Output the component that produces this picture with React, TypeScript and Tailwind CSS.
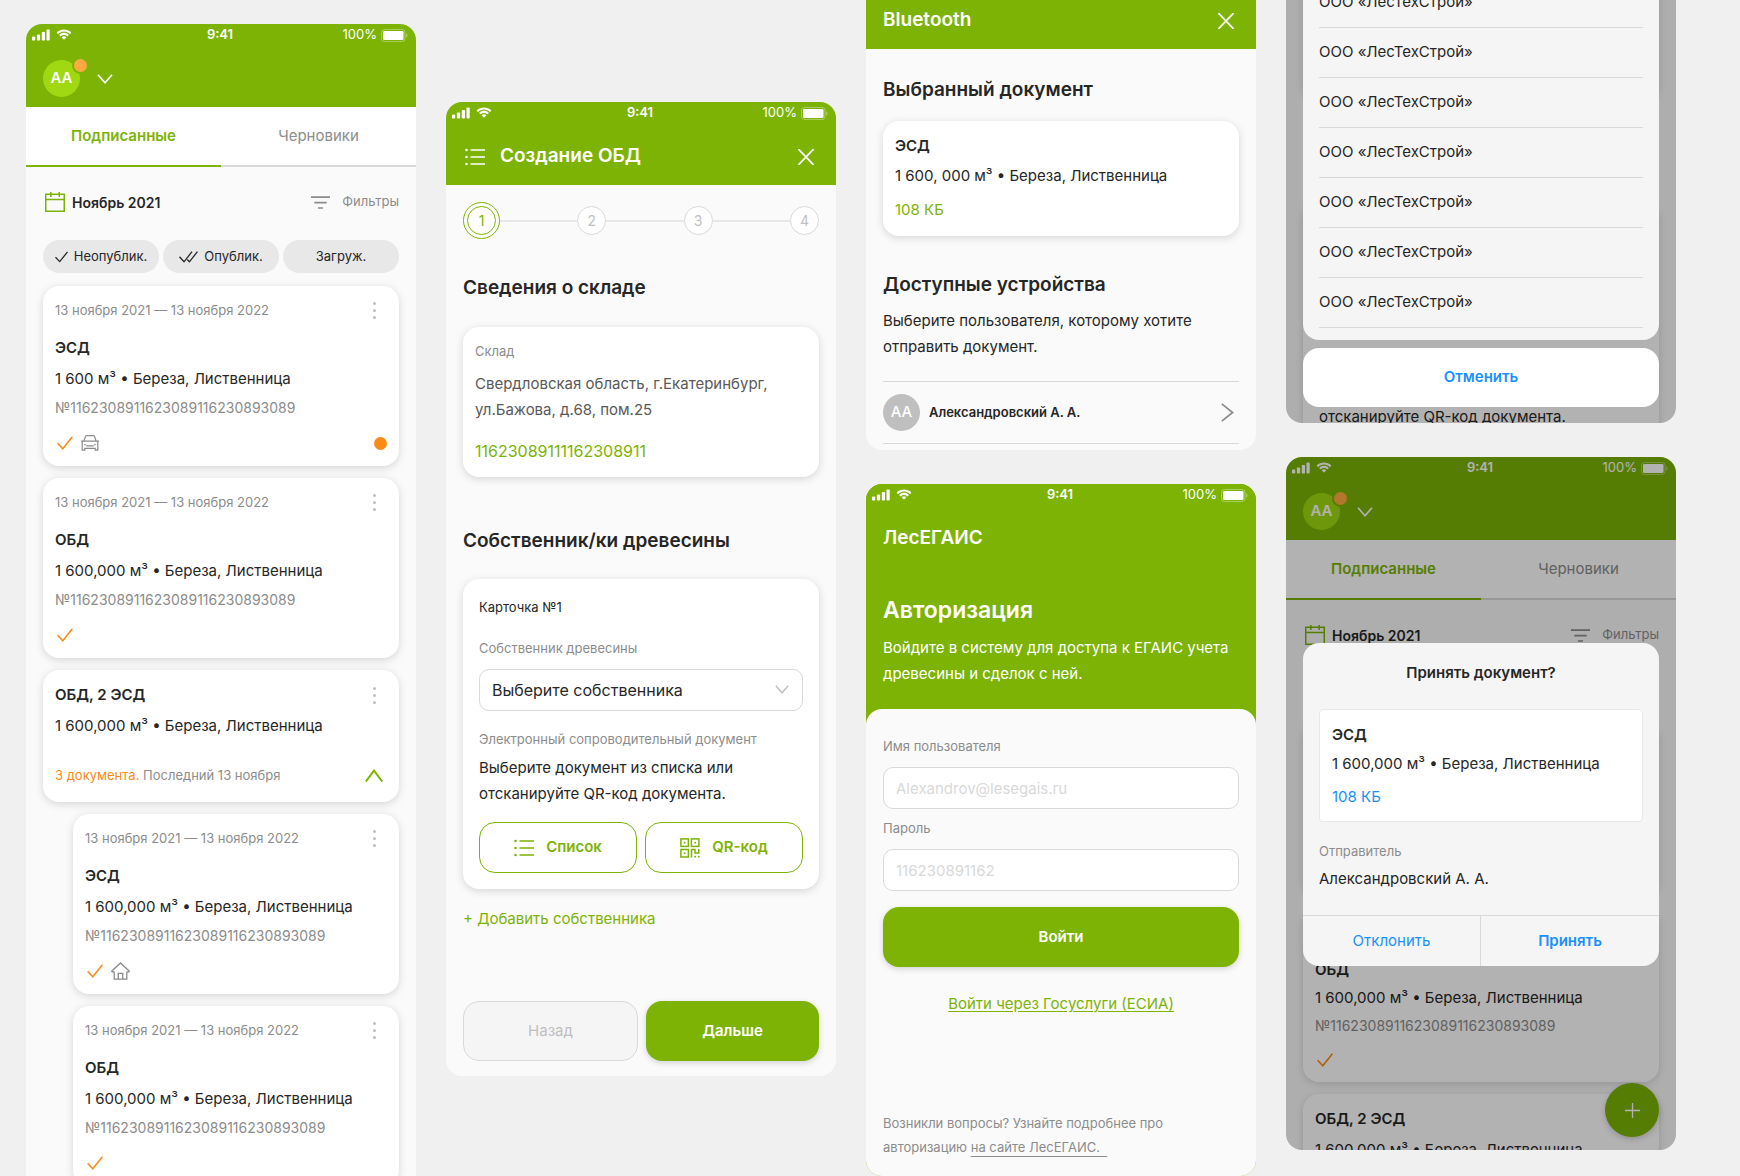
import { useId, type ReactNode } from "react";

/* ---------- icons ---------- */

function SignalIcon() {
  return (
    <svg width="18" height="12" viewBox="0 0 18 12" fill="currentColor" aria-hidden="true">
      <rect x="0" y="7.5" width="3.2" height="4" rx="0.8" />
      <rect x="4.9" y="5.5" width="3.2" height="6" rx="0.8" />
      <rect x="9.8" y="3" width="3.2" height="8.5" rx="0.8" />
      <rect x="14.5" y="0.5" width="3.2" height="11" rx="0.8" />
    </svg>
  );
}

function WifiIcon() {
  return (
    <svg width="16" height="12" viewBox="0 0 16 12" fill="currentColor" aria-hidden="true">
      <path d="M8 2.6c2.2 0 4.2.9 5.7 2.3.1.1.3.1.4 0l1.1-1.1c.1-.1.1-.3 0-.5C11.200-.3 4.800-.3.800 3.300c-.1.200-.1.400 0 .5l1.100 1.100c.1.100.3.100.4 0C3.800 3.500 5.800 2.600 8 2.600z" />
      <path d="M8 6.100c1.200 0 2.300.5 3.200 1.200.1.100.3.100.4 0l1.100-1.100c.1-.1.1-.3 0-.5-2.600-2.500-6.800-2.500-9.400 0-.1.200-.1.400 0 .5l1.100 1.100c.1.100.3.100.4 0C5.700 6.600 6.800 6.100 8 6.100z" />
      <path d="M10.200 8.500c.1-.1.1-.3 0-.5-1.300-1.100-3.100-1.100-4.400 0-.1.200-.1.400 0 .5l2 2c.1.100.3.100.4 0z" />
    </svg>
  );
}

function BatteryIcon() {
  return (
    <svg width="27" height="13" viewBox="0 0 27 13" aria-hidden="true">
      <rect x="0.5" y="0.5" width="23.500" height="12" rx="2.800" fill="none" stroke="currentColor" strokeOpacity="0.35" />
      <rect x="2" y="2" width="20.500" height="9" rx="1.200" fill="currentColor" />
      <path d="M25.200 4.500v4c.8-.3 1.300-1.100 1.300-2s-.5-1.700-1.300-2z" fill="currentColor" fillOpacity="0.4" />
    </svg>
  );
}

function ChevronDown({ className }: { className: string }) {
  return (
    <svg className={className} viewBox="0 0 16 10" fill="none" stroke="currentColor" strokeWidth="1.600" aria-hidden="true">
      <path d="M1 0.700 8 8.800 15 0.700" />
    </svg>
  );
}

function ChevronUp() {
  return (
    <svg width="18" height="13" viewBox="0 0 18 13" fill="none" stroke="currentColor" strokeWidth="2" aria-hidden="true">
      <path d="M0.800 12.500 9 1.600 17.200 12.500" />
    </svg>
  );
}

function ChevronRight() {
  return (
    <svg width="13" height="19" viewBox="0 0 13 19" fill="none" stroke="currentColor" strokeWidth="1.700" aria-hidden="true">
      <path d="M0.800 0.900 11.600 9.500 0.800 18.100" />
    </svg>
  );
}

function CloseIcon() {
  return (
    <svg width="16" height="16" viewBox="0 0 16 16" fill="none" stroke="currentColor" strokeWidth="1.700" strokeLinecap="round" aria-hidden="true">
      <path d="M0.900 0.600 15.100 15.400M15.100 0.600 0.900 15.400" />
    </svg>
  );
}

function ListIcon() {
  return (
    <svg width="20" height="18" viewBox="0 0 20 18" aria-hidden="true">
      <g fill="currentColor">
        <circle cx="1.500" cy="2" r="1.300" />
        <circle cx="1.500" cy="9" r="1.300" />
        <circle cx="1.500" cy="16" r="1.300" />
      </g>
      <path d="M5.500 2H20M5.500 9H20M5.500 16H20" stroke="currentColor" strokeWidth="1.500" />
    </svg>
  );
}

function QrIcon() {
  return (
    <svg width="20" height="20" viewBox="0 0 20 20" aria-hidden="true">
      <g fill="none" stroke="currentColor" strokeWidth="1.500">
        <rect x="0.900" y="0.900" width="7.500" height="7.500" />
        <rect x="11.400" y="0.900" width="7.500" height="7.500" />
        <rect x="0.900" y="11.500" width="7.500" height="7.500" />
        <path d="M11.500 19.500V11.500H15V15H18.800V11" />
      </g>
      <g fill="currentColor">
        <rect x="3.800" y="3.800" width="1.700" height="1.700" />
        <rect x="14.300" y="3.800" width="1.700" height="1.700" />
        <rect x="3.800" y="14.400" width="1.700" height="1.700" />
        <rect x="14.300" y="17.800" width="1.700" height="1.700" />
        <rect x="17.900" y="17.800" width="1.700" height="1.700" />
      </g>
    </svg>
  );
}

function CalendarIcon() {
  return (
    <svg width="20" height="20" viewBox="0 0 20 20" fill="none" stroke="currentColor" strokeWidth="1.500" aria-hidden="true">
      <rect x="0.750" y="2.250" width="18.500" height="17" />
      <path d="M0.750 7.500H19.250M5.800 0V5M14.200 0V5" />
    </svg>
  );
}

function FilterIcon() {
  return (
    <svg width="19" height="13" viewBox="0 0 19 13" fill="none" stroke="currentColor" strokeWidth="1.700" aria-hidden="true">
      <path d="M0 1.200H19M3.300 6.600H15.700M7 12H12" />
    </svg>
  );
}

function CheckIcon({ className }: { className: string }) {
  return (
    <svg className={className} viewBox="0 0 16 14" fill="none" stroke="currentColor" strokeWidth="1.600" aria-hidden="true">
      <path d="M0.600 7.300 5.800 12.700 15.400 0.700" />
    </svg>
  );
}

function DoubleCheckIcon() {
  return (
    <svg width="19" height="12" viewBox="0 0 19 12" fill="none" stroke="currentColor" strokeWidth="1.300" aria-hidden="true">
      <path d="M0.500 5.800 5 10.800 13 0.700M8.300 8.500 10.400 10.800 18.400 0.700" />
    </svg>
  );
}

function CarIcon() {
  return (
    <svg width="18" height="16" viewBox="0 0 18 16" fill="none" stroke="currentColor" strokeWidth="1.200" aria-hidden="true">
      <path d="M2.800 6.200 4.600 1.300Q4.800 0.700 5.500 0.700H12.500Q13.200 0.700 13.400 1.300L15.200 6.200M0 6.200H18M1.200 6.200V15.200H3.800V13.300H14.200V15.200H16.800V6.200" />
      <path d="M5.800 10.200V10.900H12.200V10.200M3.300 9.700H4.800M13.200 9.700H14.700" />
    </svg>
  );
}

function HouseIcon() {
  return (
    <svg width="19" height="18" viewBox="0 0 19 18" fill="none" stroke="currentColor" strokeWidth="1.300" aria-hidden="true">
      <path d="M3.200 9.500V17.200H15.800V9.500M3.200 9.900H1.100Q0.400 9.500 0.900 8.900L9.500 0.900 18.100 8.900Q18.600 9.500 17.900 9.900H15.800" />
      <path d="M7.300 17V11.300H11.700V17" />
    </svg>
  );
}

function PlusIcon() {
  return (
    <svg width="15" height="15" viewBox="0 0 15 15" fill="none" stroke="currentColor" strokeWidth="1.300" aria-hidden="true">
      <path d="M7.500 0V15M0 7.500H15" />
    </svg>
  );
}

/* ---------- shared parts ---------- */

function Phone({ className = "", children }: { className?: string; children: ReactNode }) {
  return (
    <section className={`relative overflow-hidden rounded-2xl bg-[#fafafa] ${className}`}>{children}</section>
  );
}

function StatusBar() {
  return (
    <div className="grid h-[22px] grid-cols-3 items-center pr-2 pl-1.5 text-[13px] text-white">
      <div className="flex items-center gap-1.5">
        <SignalIcon />
        <WifiIcon />
      </div>
      <span className="text-center font-semibold">9:41</span>
      <div className="flex items-center justify-end gap-1">
        <span>100%</span>
        <BatteryIcon />
      </div>
    </div>
  );
}

function Header({ children }: { children: ReactNode }) {
  return (
    <header className="bg-[#7cb305] text-white">
      <StatusBar />
      <div className="flex items-center px-[17px] pt-[14px] pb-[10px]">
        <div className="flex h-[37px] flex-1 items-center">{children}</div>
      </div>
    </header>
  );
}

function CloseButton() {
  return (
    <button type="button" aria-label="Закрыть" className="ml-auto grid size-[26px] place-items-center">
      <CloseIcon />
    </button>
  );
}

function Heading({ className = "", children }: { className?: string; children: ReactNode }) {
  return <h2 className={`text-[19px] leading-7 font-semibold ${className}`}>{children}</h2>;
}

function Card({ className = "", children }: { className?: string; children: ReactNode }) {
  return (
    <article className={`rounded-2xl bg-white shadow-[0_2px_8px_rgba(0,0,0,0.15)] ${className}`}>
      {children}
    </article>
  );
}

/* ---------- document list ---------- */

function MoreButton() {
  return (
    <button type="button" aria-label="Действия" className="flex h-5 w-[26px] flex-col items-center justify-center gap-1">
      <i className="size-[3px] rounded-full bg-[#bfbfbf]" />
      <i className="size-[3px] rounded-full bg-[#bfbfbf]" />
      <i className="size-[3px] rounded-full bg-[#bfbfbf]" />
    </button>
  );
}

type DocProps = {
  title: string;
  volume?: string;
  icon?: ReactNode;
  unread?: boolean;
  compact?: boolean;
  className?: string;
};

function DocCard({ title, volume = "1 600,000", icon, unread, compact, className = "" }: DocProps) {
  return (
    <Card className={`px-3 pt-[14px] ${compact ? "pb-3" : "pb-[13px]"} ${className}`}>
      <div className="flex items-center justify-between">
        <time className="text-[13px] leading-5 text-[#8c8c8c]">13 ноября 2021 — 13 ноября 2022</time>
        <MoreButton />
      </div>
      <h3 className="mt-4 text-[15px] leading-6 font-semibold">{title}</h3>
      <p className={`text-[15px] leading-6 ${compact ? "mt-1" : "mt-[7px]"}`}>{volume} м³ • Береза, Лиственница</p>
      <p className={`text-[14px] leading-5 text-[#8c8c8c] ${compact ? "mt-1.5" : "mt-[7px]"}`}>
        №1162308911623089116230893089
      </p>
      <div className={`flex h-5 items-center gap-2 pl-0.5 ${compact ? "mt-[14px]" : "mt-[15px]"}`}>
        <CheckIcon className="h-[14px] w-4 text-[#fa8c16]" />
        <span className="text-[#8c8c8c]">{icon}</span>
        {unread && <i className="ml-auto size-[13px] rounded-full bg-[#fa8c16]" />}
      </div>
    </Card>
  );
}

function GroupCard() {
  return (
    <Card className="px-3 pt-[13px] pb-[17px]">
      <div className="flex items-center justify-between">
        <h3 className="text-[15px] leading-6 font-semibold">ОБД, 2 ЭСД</h3>
        <MoreButton />
      </div>
      <p className="mt-[7px] text-[15px] leading-6">1 600,000 м³ • Береза, Лиственница</p>
      <div className="mt-[27px] flex items-center justify-between">
        <p className="text-[13px] leading-5 text-[#8c8c8c]">
          <span className="text-[#fa8c16]">3 документа.</span> Последний 13 ноября
        </p>
        <button type="button" aria-label="Свернуть" className="mr-1 text-[#7cb305]">
          <ChevronUp />
        </button>
      </div>
    </Card>
  );
}

function DocumentsScreen({ compact, children }: { compact?: boolean; children: ReactNode }) {
  const chip = "flex h-[33px] flex-1 items-center justify-center rounded-full bg-[#e8e8e8] text-[13px]";
  return (
    <>
      <Header>
        <div className="relative grid size-[37px] place-items-center rounded-full bg-[#a0d911] text-[15px] font-semibold">
          АА
          <i className="absolute -top-[3px] -right-[9px] size-[17px] rounded-full border-2 border-[#7cb305] bg-[#ffa940]" />
        </div>
        <button type="button" aria-label="Сменить профиль" className="ml-[17px]">
          <ChevronDown className="h-[10px] w-4" />
        </button>
      </Header>
      <nav className="grid h-[60px] grid-cols-2 bg-white text-[15px]">
        <button type="button" className="border-b-2 border-[#7cb305] font-semibold text-[#7cb305]">
          Подписанные
        </button>
        <button type="button" className="border-b-2 border-[#d9d9d9] text-[#8c8c8c]">
          Черновики
        </button>
      </nav>
      <div className="px-[17px] pb-4">
        <div className="mt-[23px] flex h-6 items-center justify-between">
          <button type="button" className="flex items-center gap-[7px] pl-0.5 text-[14px] font-semibold">
            <span className="text-[#7cb305]">
              <CalendarIcon />
            </span>
            Ноябрь 2021
          </button>
          <button type="button" className="flex items-center gap-3 text-[13px] text-[#8c8c8c]">
            <FilterIcon />
            Фильтры
          </button>
        </div>
        <div className="mt-[26px] flex gap-1">
          <button type="button" className={`${chip} gap-1.5`}>
            <CheckIcon className="h-3 w-[13px]" />
            Неопублик.
          </button>
          <button type="button" className={`${chip} gap-1.5`}>
            <DoubleCheckIcon />
            Опублик.
          </button>
          <button type="button" className={chip}>
            Загруж.
          </button>
        </div>
        <div className={`flex flex-col gap-3 ${compact ? "mt-4" : "mt-[13px]"}`}>{children}</div>
      </div>
    </>
  );
}

/* ---------- document creation ---------- */

function Step({ n }: { n: number }) {
  return (
    <>
      <li className="h-0.5 flex-1 bg-[#e8e8e8]" aria-hidden="true" />
      <li className="grid size-[29px] place-items-center rounded-full border border-[#d9d9d9] bg-white text-[#bfbfbf]">
        {n}
      </li>
    </>
  );
}

function CreateScreen() {
  const ownerId = useId();
  const action =
    "flex h-[51px] flex-1 items-center justify-center gap-3 rounded-2xl border border-[#7cb305] text-[15px] font-semibold text-[#7cb305]";
  return (
    <>
      <Header>
        <button type="button" aria-label="Меню" className="grid w-6 place-items-center">
          <ListIcon />
        </button>
        <h1 className="ml-[13px] text-[19px] font-semibold">Создание ОБД</h1>
        <CloseButton />
      </Header>
      <div className="px-[17px] pb-[15px]">
        <ol className="mt-[17px] flex items-center text-[14px]">
          <li className="grid size-[37px] place-items-center rounded-full border border-[#7cb305] bg-white text-[#7cb305]">
            <span className="grid size-[29px] place-items-center rounded-full border border-[#7cb305]">1</span>
          </li>
          <Step n={2} />
          <Step n={3} />
          <Step n={4} />
        </ol>

        <Heading className="mt-[35px]">Сведения о складе</Heading>
        <Card className="mt-[25px] px-3 pt-[14px] pb-[14px]">
          <p className="text-[13px] leading-5 text-[#8c8c8c]">Склад</p>
          <p className="mt-2.5 text-[15px] leading-[26px] text-[#595959]">
            Свердловская область, г.Екатеринбург,
            <br />
            ул.Бажова, д.68, пом.25
          </p>
          <p className="mt-4 text-[16px] leading-6 text-[#7cb305]">11623089111162308911</p>
        </Card>

        <Heading className="mt-[50px]">Собственник/ки древесины</Heading>
        <Card className="mt-6 p-4">
          <p className="mt-[2px] text-[13px] leading-5">Карточка №1</p>
          <label htmlFor={ownerId} className="mt-[21px] block text-[13px] leading-5 text-[#8c8c8c]">
            Собственник древесины
          </label>
          <div className="relative mt-[11px]">
            <select
              id={ownerId}
              className="h-[42px] w-full appearance-none rounded-[10px] border border-[#d9d9d9] bg-white px-3 text-[16px]"
            >
              <option>Выберите собственника</option>
            </select>
            <ChevronDown className="pointer-events-none absolute top-4 right-[14px] h-[9px] w-[14px] text-[#bfbfbf]" />
          </div>
          <p className="mt-[18px] text-[13px] leading-5 text-[#8c8c8c]">Электронный сопроводительный документ</p>
          <p className="mt-1.5 text-[15px] leading-[26px]">
            Выберите документ из списка или
            <br />
            отсканируйте QR-код документа.
          </p>
          <div className="mt-[15px] flex gap-2">
            <button type="button" className={action}>
              <ListIcon />
              Список
            </button>
            <button type="button" className={action}>
              <QrIcon />
              QR-код
            </button>
          </div>
        </Card>
        <button type="button" className="mt-[18px] block text-[15px] leading-6 text-[#7cb305]">
          + Добавить собственника
        </button>
        <div className="mt-[70px] flex gap-2 text-[15px]">
          <button type="button" disabled className="h-[60px] flex-1 rounded-2xl border border-[#d9d9d9] bg-[#f5f5f5] text-[#bfbfbf]">
            Назад
          </button>
          <button
            type="button"
            className="h-[60px] flex-1 rounded-2xl bg-[#7cb305] font-semibold text-white shadow-[0_2px_6px_rgba(0,0,0,0.16)]"
          >
            Дальше
          </button>
        </div>
      </div>
    </>
  );
}

/* ---------- bluetooth ---------- */

function BluetoothScreen() {
  return (
    <>
      <Header>
        <h1 className="text-[19px] font-semibold">Bluetooth</h1>
        <CloseButton />
      </Header>
      <div className="px-[17px] pb-1.5">
        <Heading className="mt-[27px]">Выбранный документ</Heading>
        <Card className="mt-[17px] px-3 pt-[13px] pb-[14px]">
          <h3 className="text-[15px] leading-6 font-semibold">ЭСД</h3>
          <p className="mt-1.5 text-[15px] leading-6">1 600, 000 м³ • Береза, Лиственница</p>
          <p className="mt-2.5 text-[15px] leading-6 text-[#7cb305]">108 КБ</p>
        </Card>
        <Heading className="mt-[35px]">Доступные устройства</Heading>
        <p className="mt-[9px] text-[15px] leading-[26px]">
          Выберите пользователя, которому хотите
          <br />
          отправить документ.
        </p>
        <button type="button" className="mt-[21px] flex h-[63px] w-full items-center border-y border-[#d9d9d9]">
          <span className="grid size-[37px] place-items-center rounded-full bg-[#bfbfbf] text-[15px] font-medium text-white">
            АА
          </span>
          <span className="ml-[9px] text-[13px] font-semibold">Александровский А. А.</span>
          <span className="mr-[5px] ml-auto text-[#8c8c8c]">
            <ChevronRight />
          </span>
        </button>
      </div>
    </>
  );
}

/* ---------- login ---------- */

function LoginScreen() {
  const userId = useId();
  const passId = useId();
  const input =
    "mt-[11px] h-[42px] w-full rounded-[10px] border border-[#d9d9d9] bg-white px-3 text-[15px] placeholder:text-[#d9d9d9]";
  return (
    <div className="bg-[#7cb305]">
      <Header>
        <h1 className="text-[19px] font-semibold">ЛесЕГАИС</h1>
      </Header>
      <div className="px-[17px] pt-[27px] pb-[22px] text-white">
        <h2 className="text-[23px] leading-8 font-semibold">Авторизация</h2>
        <p className="mt-[9px] text-[15px] leading-[26px]">
          Войдите в систему для доступа к ЕГАИС учета
          <br />
          древесины и сделок с ней.
        </p>
      </div>
      <form className="rounded-t-2xl bg-[#fafafa] px-[17px] pt-[27px] pb-[17px]">
        <label htmlFor={userId} className="block text-[13px] leading-5 text-[#8c8c8c]">
          Имя пользователя
        </label>
        <input id={userId} type="email" placeholder="Alexandrov@lesegais.ru" className={input} />
        <label htmlFor={passId} className="mt-[9px] block text-[13px] leading-5 text-[#8c8c8c]">
          Пароль
        </label>
        <input id={passId} type="password" placeholder="116230891162" className={input} />
        <button
          type="button"
          className="mt-4 h-[60px] w-full rounded-2xl bg-[#7cb305] text-[15px] font-semibold text-white shadow-[0_2px_6px_rgba(0,0,0,0.16)]"
        >
          Войти
        </button>
        <a href="#esia" className="mx-auto mt-[25px] block w-fit text-[15px] leading-6 text-[#7cb305] underline underline-offset-2">
          Войти через Госуслуги (ЕСИА)
        </a>
        <p className="mt-[95px] text-[13px] leading-6 text-[#8c8c8c]">
          Возникли вопросы? Узнайте подробнее про
          <br />
          авторизацию{" "}
          <a href="#site" className="underline underline-offset-4">
            на сайте ЛесЕГАИС.{"\u00a0\u00a0"}
          </a>
        </p>
      </form>
    </div>
  );
}

/* ---------- overlays ---------- */

function OwnerSheet() {
  return (
    <div className="absolute inset-0 flex flex-col justify-end gap-2 bg-black/30 px-[17px] pb-4">
      <ul className="rounded-2xl bg-[#f5f5f5] px-4 pt-3 pb-3 text-[15px]">
        {Array.from({ length: 7 }, (_, i) => (
          <li key={i} className="border-b border-[#d9d9d9]">
            <button type="button" className="h-[49px] w-full text-left">
              ООО «ЛесТехСтрой»
            </button>
          </li>
        ))}
      </ul>
      <button type="button" className="h-[59px] shrink-0 rounded-2xl bg-white text-[15px] font-semibold text-[#1890ff]">
        Отменить
      </button>
    </div>
  );
}

function AcceptDialog() {
  return (
    <div className="absolute inset-0 flex flex-col bg-black/30 px-[17px] pt-[186px]">
      <div role="dialog" aria-label="Принять документ?" className="overflow-hidden rounded-2xl bg-[#f5f5f5]">
        <div className="px-4 pt-[18px] pb-6">
          <h2 className="text-center text-[15px] leading-6 font-semibold">Принять документ?</h2>
          <div className="mt-[24px] rounded border border-[#e8e8e8] bg-white px-3 pt-[13px] pb-3">
            <h3 className="text-[15px] leading-6 font-semibold">ЭСД</h3>
            <p className="mt-[5px] text-[15px] leading-6">1 600,000 м³ • Береза, Лиственница</p>
            <p className="mt-[9px] text-[15px] leading-6 text-[#1890ff]">108 КБ</p>
          </div>
          <p className="mt-[19px] text-[13px] leading-5 text-[#8c8c8c]">Отправитель</p>
          <p className="mt-1.5 text-[15px] leading-6">Александровский А. А.</p>
        </div>
        <div className="grid grid-cols-2 border-t border-[#d9d9d9] text-[15px] text-[#1890ff]">
          <button type="button" className="h-[50px] border-r border-[#d9d9d9]">
            Отклонить
          </button>
          <button type="button" className="h-[50px] font-semibold">
            Принять
          </button>
        </div>
      </div>
    </div>
  );
}

/* ---------- board ---------- */

export default function App() {
  return (
    <main className="grid h-screen grid-cols-4 items-start gap-[30px] overflow-hidden bg-[#f0f0f0] pr-16 pl-[26px] font-['Inter',sans-serif] text-[#262626]">
      <Phone className="mt-6">
        <DocumentsScreen>
          <DocCard title="ЭСД" volume="1 600" icon={<CarIcon />} unread />
          <DocCard title="ОБД" />
          <GroupCard />
          <DocCard title="ЭСД" icon={<HouseIcon />} className="ml-[30px]" />
          <DocCard title="ОБД" className="ml-[30px]" />
        </DocumentsScreen>
      </Phone>

      <Phone className="mt-[102px]">
        <CreateScreen />
      </Phone>

      <div className="flex flex-col gap-[34px]">
        <Phone className="-mt-[34px]">
          <BluetoothScreen />
        </Phone>
        <Phone>
          <LoginScreen />
        </Phone>
      </div>

      <div className="flex flex-col gap-[34px]">
        <Phone className="-mt-[275px] h-[698px]">
          <CreateScreen />
          <OwnerSheet />
        </Phone>
        <Phone className="h-[693px]">
          <DocumentsScreen compact>
            <DocCard title="ЭСД" volume="1 600" icon={<CarIcon />} unread compact />
            <DocCard title="ОБД" compact />
            <GroupCard />
          </DocumentsScreen>
          <button
            type="button"
            aria-label="Создать документ"
            className="absolute right-[17px] bottom-[13px] grid size-[54px] place-items-center rounded-full bg-[#7cb305] text-white shadow-[0_2px_6px_rgba(0,0,0,0.2)]"
          >
            <PlusIcon />
          </button>
          <AcceptDialog />
        </Phone>
      </div>
    </main>
  );
}
